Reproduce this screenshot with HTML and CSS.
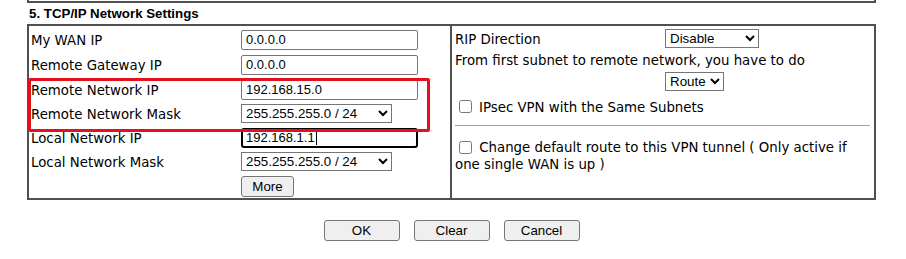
FILE: index.html
```html
<!DOCTYPE html>
<html lang="en">
<head>
<meta charset="utf-8">
<title>TCP/IP Network Settings</title>
<link rel="stylesheet" href="styles.css">
</head>
<body>
<div class="page">
  <div class="prev-box"></div>
  <h3 class="section-title">5. TCP/IP Network Settings</h3>
  <div class="settings">
    <div class="col-left">
      <div class="row">
        <span class="label">My WAN IP</span>
        <input class="ip" type="text" value="0.0.0.0">
      </div>
      <div class="row">
        <span class="label">Remote Gateway IP</span>
        <input class="ip" type="text" value="0.0.0.0">
      </div>
      <div class="row">
        <span class="label">Remote Network IP</span>
        <input class="ip" type="text" value="192.168.15.0">
      </div>
      <div class="row short">
        <span class="label">Remote Network Mask</span>
        <select class="mask"><option>255.255.255.0 / 24</option></select>
      </div>
      <div class="row">
        <span class="label">Local Network IP</span>
        <div class="ip focused"><span>192.168.1.1</span><span class="caret"></span></div>
      </div>
      <div class="row short">
        <span class="label">Local Network Mask</span>
        <select class="mask"><option>255.255.255.0 / 24</option></select>
      </div>
      <div class="row">
        <span class="label"></span>
        <button class="btn more" type="button">More</button>
      </div>
    </div>
    <div class="col-right">
      <div class="row short">
        <span class="label">RIP Direction</span>
        <select class="rip"><option>Disable</option></select>
      </div>
      <div class="note">From first subnet to remote network, you have to do</div>
      <div class="row short">
        <span class="label"></span>
        <select class="route"><option>Route</option></select>
      </div>
      <label class="check-row">
        <input type="checkbox" class="check">
        <span class="check-text">IPsec VPN with the Same Subnets</span>
      </label>
      <div class="divider"></div>
      <p class="default-route"><input type="checkbox" class="check inline"> Change default route to this VPN tunnel ( Only active if one single WAN is up )</p>
    </div>
    <div class="highlight"></div>
  </div>
  <div class="actions">
    <button class="btn action" type="button">OK</button>
    <button class="btn action" type="button">Clear</button>
    <button class="btn action" type="button">Cancel</button>
  </div>
</div>
</body>
</html>
```
FILE: styles.css
```css
* {
  box-sizing: border-box;
}

body {
  margin: 0;
  background: #ffffff;
  color: #000000;
  font-family: "DejaVu Sans", Verdana, sans-serif;
  font-size: 13.33px;
}

.page {
  padding-left: 27px;
  width: 880px;
}

.prev-box {
  width: 849px;
  height: 3px;
  border: 2px solid #505050;
  border-top: 0;
}

.section-title {
  margin: 3px 0 2px;
  padding-left: 2px;
  height: 16px;
  line-height: 16px;
  font-family: "Liberation Sans", Arial, sans-serif;
  font-size: 13.3px;
  font-weight: bold;
}

.settings {
  position: relative;
  display: flex;
  width: 849px;
  height: 176px;
  border: 2px solid #505050;
}

.col-left {
  width: 423px;
  flex: none;
  padding: 1px 0 0 2px;
  border-right: 2px solid #505050;
}

.col-right {
  flex: 1;
  padding: 1px 4px 0 3px;
}

.row {
  display: flex;
  align-items: center;
  height: 25px;
}

.row.short {
  height: 23px;
}

.label {
  width: 210px;
  flex: none;
  padding-top: 2px;
}

.ip,
.btn {
  font-family: "Liberation Sans", Arial, sans-serif;
  font-size: 13px;
  color: #000000;
}

select {
  font-family: "Liberation Sans", Arial, sans-serif;
  font-size: 13.33px;
  color: #000000;
}

.ip {
  width: 177px;
  height: 20px;
  margin: 0;
  padding: 1px 4px;
  border: 1px solid #767676;
  border-radius: 2px;
  background: #ffffff;
}

.ip.focused {
  display: flex;
  align-items: center;
  border: 2px solid #000000;
  border-radius: 3px;
  padding: 0 3px;
  overflow: hidden;
}

.caret {
  width: 1px;
  height: 14px;
  margin-left: 1px;
  background: #000000;
}

select {
  height: 19px;
  margin: 0;
  border: 1px solid #767676;
  border-radius: 0;
  background: #ffffff;
}

.mask {
  width: 151px;
}

.rip {
  width: 94px;
}

.route {
  width: 59px;
}

.btn {
  height: 21px;
  margin: 0;
  padding: 0;
  border: 1px solid #767676;
  border-radius: 3px;
  background: #efefef;
  font-size: 13.33px;
}

.more {
  width: 53px;
  margin-top: 1px;
}

.note {
  height: 20px;
  line-height: 20px;
  padding-top: 1px;
  white-space: nowrap;
}

.check-row {
  display: flex;
  align-items: center;
  height: 26px;
}

.check {
  width: 13px;
  height: 13px;
  margin: 0 3px 0 4px;
}

.check-text {
  margin-left: 4px;
  padding-top: 2px;
}

.divider {
  height: 1px;
  margin-top: 6px;
  background: #a0a0a0;
}

.default-route {
  margin: 13px 0 0;
  line-height: 17px;
}

.check.inline {
  vertical-align: -2px;
}

.highlight {
  position: absolute;
  left: -1px;
  top: 52px;
  width: 402px;
  height: 54px;
  border: 3px solid #e3101e;
  border-radius: 2px;
  pointer-events: none;
}

.actions {
  display: flex;
  justify-content: center;
  gap: 14px;
  width: 849px;
  margin-top: 20px;
}

.action {
  width: 76px;
}
```
